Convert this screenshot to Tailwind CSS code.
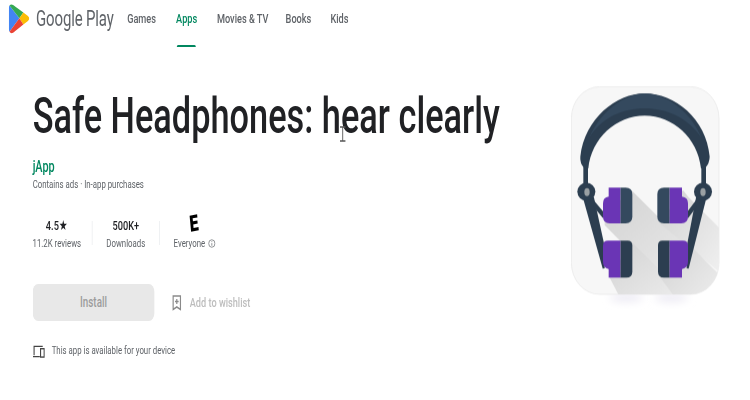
<!DOCTYPE html>
<html><head><meta charset="utf-8"><script src="https://cdn.jsdelivr.net/npm/@tailwindcss/browser@4"></script></head>
<body class="bg-white overflow-hidden">
<div class="relative w-[1102px] h-[400px] origin-top-left scale-x-[0.68] font-['Roboto',sans-serif] text-[#5f6368]">
  <header class="h-[47px] flex items-stretch pl-[13px]">
    <div class="flex items-center gap-[10px] w-[174px] h-[37px]">
      <svg class="w-[30px] h-[31px] shrink-0" viewBox="0 0 62 95" preserveAspectRatio="none"><path d="M2 8 L32 47 L2 88 Q0 84 0 78 V16 Q0 11 2 8Z" fill="#4285f4"/><path d="M2 8 Q6 2 13 6 L44 29 L32 47Z" fill="#34a853"/><path d="M44 29 L58 40 Q66 47 58 55 L44 66 L32 47Z" fill="#fbbc04"/><path d="M2 88 L32 47 L44 66 L13 91 Q6 95 2 88Z" fill="#ea4335"/></svg>
      <span class="text-[22px] leading-none text-[#5f6368] tracking-[-0.2px] whitespace-nowrap">Google Play</span>
    </div>
    <nav class="flex text-[13.5px] font-medium">
      <a class="w-[72px] pt-[8px]">Games</a>
      <a class="relative w-[60px] pt-[8px] text-[#01875f]">Apps<span class="absolute left-[1px] bottom-0 w-[28px] h-[2px] rounded-t bg-[#01875f]"></span></a>
      <a class="w-[101px] pt-[8px]">Movies &amp; TV</a>
      <a class="w-[66px] pt-[8px]">Books</a>
      <a class="pt-[8px]">Kids</a>
    </nav>
  </header>
  <main class="flex justify-between pl-[48px] pr-[29px]">
    <section class="flex flex-col">
      <h1 class="mt-[41px] text-[50.5px] leading-[56px] font-medium text-[#202124] whitespace-nowrap">Safe Headphones: hear clearly</h1>
      <a class="mt-[13px] text-[16px] leading-[20px] font-medium text-[#01875f]">jApp</a>
      <p class="mt-[-1px] text-[11.5px] leading-[16px] whitespace-nowrap">Contains ads · In-app purchases</p>
      <div class="mt-[23px] flex items-center">
        <div class="w-[71px] flex flex-col items-center"><span class="text-[13.5px] leading-[20px] font-medium text-[#202124]">4.5★</span><span class="text-[11.5px] leading-[16px] whitespace-nowrap">11.2K reviews</span></div>
        <i class="ml-[16px] w-px h-[24px] bg-[#e8eaed]"></i>
        <div class="w-[98px] flex flex-col items-center"><span class="text-[13.5px] leading-[20px] font-medium text-[#202124]">500K+</span><span class="text-[11.5px] leading-[16px]">Downloads</span></div>
        <i class="w-px h-[24px] bg-[#e8eaed]"></i>
        <div class="w-[102px] flex flex-col items-center"><span class="h-[20px] text-[22px] leading-[18px] font-black text-black -rotate-[8deg] font-['DejaVu_Sans',sans-serif]">E</span><span class="text-[11.5px] leading-[16px] flex items-center gap-[4px]">Everyone <svg class="w-[11px] h-[9px]" viewBox="0 0 12 12" preserveAspectRatio="none" fill="none" stroke="#5f6368"><circle cx="6" cy="6" r="5"/><path d="M6 5.5V9M6 3v1.2"/></svg></span></div>
      </div>
      <div class="mt-[33px] flex items-center h-[37px]">
        <button class="w-[179px] h-[37px] rounded-[8px] bg-[#e8e8e8] text-[14.5px] font-medium text-[#9c9c9c]">Install</button>
        <svg class="ml-[26px] w-[14px] h-[16px]" viewBox="0 0 13 16" preserveAspectRatio="none" fill="none" stroke="#8a8a8a" stroke-width="1.6"><path d="M1.5 1h10v13.5L6.5 12l-5 2.5zM6.5 4v5M4 6.5h5"/></svg>
        <span class="ml-[12px] text-[13.5px] font-medium text-[#bdbdbd] whitespace-nowrap">Add to wishlist</span>
      </div>
      <div class="mt-[20px] flex items-center h-[20px]">
        <svg class="w-[18px] h-[13px]" viewBox="0 0 17 14" preserveAspectRatio="none" fill="none" stroke="#444" stroke-width="1.5"><path d="M2 11V1.5h12M0 12.5h10"/><rect x="11" y="4" width="5" height="9"/></svg>
        <span class="ml-[10px] text-[11.5px] whitespace-nowrap">This app is available for your device</span>
      </div>
    </section>
    <svg class="mt-[28px] w-[250px] h-[240px] shrink-0" viewBox="0 0 510 720" preserveAspectRatio="none">
      <defs>
        <clipPath id="c"><rect x="35" y="35" width="443" height="623" rx="85" ry="95"/></clipPath>
        <linearGradient id="s" x1="0" y1="0" x2="1" y2="1"><stop offset="0" stop-color="#d2d2d2"/><stop offset="1" stop-color="#f0f0f0"/></linearGradient>
        <filter id="b" x="-30%" y="-100%" width="160%" height="300%"><feGaussianBlur stdDeviation="12"/></filter>
      </defs>
      <ellipse cx="200" cy="668" rx="50" ry="12" fill="#ebe9f3" filter="url(#b)"/>
      <ellipse cx="335" cy="668" rx="50" ry="12" fill="#ebe9f3" filter="url(#b)"/>
      <rect x="35" y="35" width="443" height="623" rx="85" ry="95" fill="#f7f7f7" stroke="#e6e6e6" stroke-width="2"/>
      <g clip-path="url(#c)" fill="url(#s)">
        <path d="M215 345 L478 608 V658 L340 658 L135 450 L135 420Z"/>
        <path d="M215 500 L400 685 H190 L150 608 Z"/>
        <path d="M370 345 L385 365 L478 458 V590 L300 445Z"/>
        <path d="M385 505 L478 598 V700 H370 L300 605Z"/>
      </g>
      <path d="M78 275 V340 M432 275 V340" stroke="#2c3e50" stroke-width="14"/>
      <path d="M72 365 L132 580 L130 505 L100 368Z M438 365 L384 580 L386 505 L412 368Z" fill="#2c3e50" stroke="#2c3e50" stroke-width="6"/>
      <path d="M85 365 L135 425 M425 365 L380 425" stroke="#2c3e50" stroke-width="13"/>
      <path d="M62 245 C75 130 170 55 255 55 C345 55 440 130 450 245 Q450 265 436 280 L424 280 C415 190 340 122 255 122 C170 122 95 190 86 280 L74 280 Q60 265 62 245Z" fill="#2c3e50"/>
      <path d="M88 190 C125 100 205 55 255 55 C310 55 390 100 426 190 C385 125 315 100 255 100 C195 100 125 125 88 190Z" fill="#34495e"/>
      <circle cx="80" cy="350" r="27" fill="#2c3e50"/><ellipse cx="82" cy="351" rx="8" ry="12" fill="#9aa0a3"/>
      <circle cx="430" cy="350" r="27" fill="#2c3e50"/><ellipse cx="430" cy="351" rx="8" ry="12" fill="#9aa0a3"/>
      <path d="M182 338 H198 Q218 338 218 358 V425 Q218 445 198 445 H182Z" fill="#34495e"/>
      <path d="M182 338 V445 H150 Q130 445 130 425 V385 Q130 367 147 365 V338Z" fill="#6a35b5"/>
      <path d="M182 497 H204 Q218 497 218 512 V590 Q218 608 200 608 H182Z" fill="#2c3e50"/>
      <path d="M182 497 V608 H147 V582 Q130 580 130 560 V512 Q130 497 145 497Z" fill="#6a35b5"/>
      <path d="M330 338 H313 Q293 338 293 358 V425 Q293 445 313 445 H330Z" fill="#34495e"/>
      <path d="M330 338 V445 H365 Q385 445 385 425 V385 Q385 367 367 365 V338Z" fill="#6a35b5"/>
      <path d="M330 497 H308 Q295 497 295 512 V590 Q295 608 313 608 H330Z" fill="#2c3e50"/>
      <path d="M330 497 V608 H367 V582 Q385 580 385 560 V512 Q385 497 370 497Z" fill="#6a35b5"/>
    </svg>
  </main>
  <svg class="absolute left-[498px] top-[126px] w-[12px] h-[16px]" viewBox="0 0 12 16" fill="none" stroke="#555" stroke-width="1.3"><path d="M2 1h8M6 1v14M2 15h8"/></svg>
</div>
</body></html>
